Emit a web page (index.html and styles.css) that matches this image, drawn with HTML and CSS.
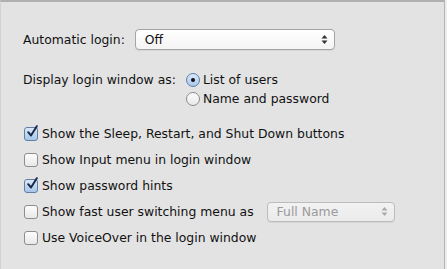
FILE: index.html
```html
<!DOCTYPE html>
<html>
<head>
<meta charset="utf-8">
<link rel="stylesheet" href="styles.css">
</head>
<body>
<div class="panel">
  <div class="row login-row">
    <span class="label">Automatic login:</span>
    <div class="popup">
      <span>Off</span>
      <svg class="arrows" width="7" height="11" viewBox="0 0 7 11"><path d="M3.5 1 L6.5 4.5 H0.5 Z" fill="#333"/><path d="M3.5 10 L6.5 6.5 H0.5 Z" fill="#333"/></svg>
    </div>
  </div>
  <div class="display-row">
    <span class="label">Display login window as:</span>
    <div class="radios">
      <label class="radio-item"><span class="radio on"><span class="dot"></span></span>List of users</label>
      <label class="radio-item"><span class="radio"></span>Name and password</label>
    </div>
  </div>
  <div class="checks">
    <label class="check-item"><span class="box on"><svg width="14" height="14" viewBox="0 0 14 14"><path d="M3.2 7.2 L6 10.5 L11.8 1.2" fill="none" stroke="#1a2a4a" stroke-width="2" stroke-linecap="round" stroke-linejoin="round"/></svg></span>Show the Sleep, Restart, and Shut Down buttons</label>
    <label class="check-item"><span class="box"></span>Show Input menu in login window</label>
    <label class="check-item"><span class="box on"><svg width="14" height="14" viewBox="0 0 14 14"><path d="M3.2 7.2 L6 10.5 L11.8 1.2" fill="none" stroke="#1a2a4a" stroke-width="2" stroke-linecap="round" stroke-linejoin="round"/></svg></span>Show password hints</label>
    <div class="check-item"><span class="box"></span><span class="fast">Show fast user switching menu as</span>
      <div class="popup small disabled">
        <span>Full Name</span>
        <svg class="arrows" width="7" height="11" viewBox="0 0 7 11"><path d="M3.5 1 L6.5 4.5 H0.5 Z" fill="#aaa"/><path d="M3.5 10 L6.5 6.5 H0.5 Z" fill="#aaa"/></svg>
      </div>
    </div>
    <label class="check-item"><span class="box"></span>Use VoiceOver in the login window</label>
  </div>
</div>
</body>
</html>
```
FILE: styles.css
```css
html, body {
  margin: 0;
  padding: 0;
  background: #ececec;
  width: 447px;
  height: 269px;
  overflow: hidden;
}
body {
  font-family: "DejaVu Sans", "Liberation Sans", sans-serif;
  font-size: 12.4px;
  color: #111;
}
.panel {
  box-sizing: border-box;
  width: 445px;
  height: 275px;
  background: #e3e3e3;
  border-top: 2px solid #b0b0b0;
  border-right: 1px solid #b5b5b5;
  border-left: 1px solid #d2d2d2;
  padding: 27px 0 0 22px;
}
.row {
  display: flex;
  align-items: center;
}
.login-row .label {
  margin-right: 10px;
}
.popup {
  box-sizing: border-box;
  width: 200px;
  height: 21px;
  display: flex;
  align-items: center;
  justify-content: space-between;
  padding: 0 6px 0 9px;
  background: linear-gradient(#ffffff, #f4f4f4);
  border: 1px solid #a4a4a4;
  border-radius: 4px;
  box-shadow: 0 1px 0 rgba(0,0,0,0.06);
}
.display-row {
  display: flex;
  align-items: flex-start;
  margin-top: 22px;
}
.display-row .label {
  margin-right: 10px;
}
.radios {
  display: flex;
  flex-direction: column;
  gap: 4px;
}
.radio-item {
  display: flex;
  align-items: center;
  height: 15px;
}
.radio {
  box-sizing: border-box;
  width: 14px;
  height: 14px;
  border-radius: 50%;
  border: 1px solid #8c8c8c;
  background: linear-gradient(#fdfdfd, #e9e9e9);
  margin-right: 3px;
  display: flex;
  align-items: center;
  justify-content: center;
}
.radio.on {
  border-color: #5b7fa8;
  background: linear-gradient(#dbe9f8, #aac8ec);
}
.dot {
  width: 4px;
  height: 4px;
  border-radius: 50%;
  background: #111;
}
.checks {
  margin-top: 20px;
  display: flex;
  flex-direction: column;
  gap: 11px;
}
.check-item {
  display: flex;
  align-items: center;
  height: 15px;
  padding-left: 1px;
}
.box {
  box-sizing: border-box;
  position: relative;
  width: 14px;
  height: 14px;
  border: 1px solid #8e8e8e;
  border-radius: 3px;
  background: linear-gradient(#fdfdfd, #e8e8e8);
  margin-right: 4px;
  flex: none;
}
.box.on {
  border-color: #5f7fa6;
  background: linear-gradient(#dbe9f8, #a7c5ea);
}
.box svg {
  position: absolute;
  left: 0;
  top: -3px;
}
.fast {
  margin-right: 13px;
}
.popup.small {
  width: 128px;
  height: 20px;
  border-color: #bcbcbc;
  background: linear-gradient(#f2f2f2, #ebebeb);
}
.popup.disabled span {
  color: #9a9a9a;
}
```
